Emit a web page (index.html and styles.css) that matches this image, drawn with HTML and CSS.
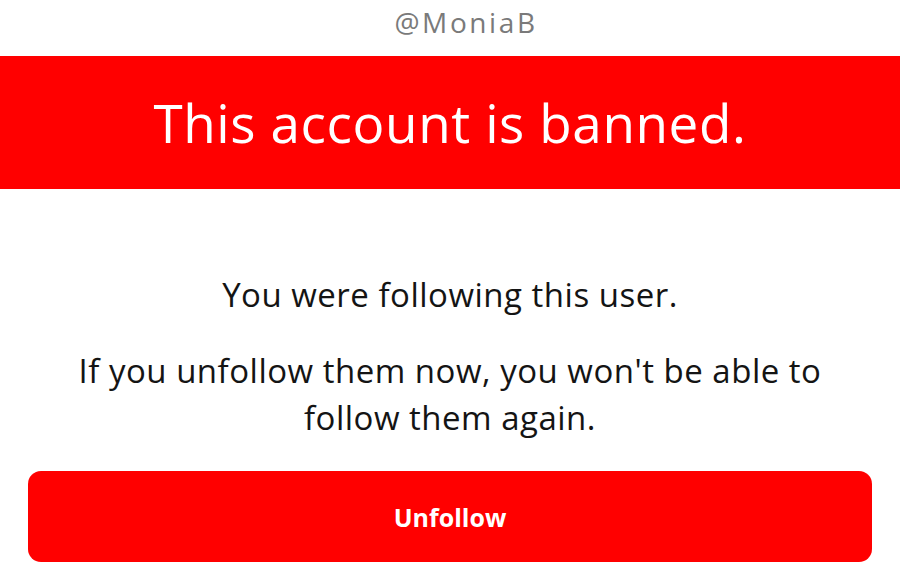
FILE: index.html
```html
<!DOCTYPE html>
<html>
<head>
<meta charset="utf-8">
<link rel="stylesheet" href="styles.css">
</head>
<body>
<div class="page">
  <div class="handle">@MoniaB</div>
  <div class="banner"><h1 class="title">This account is banned.</h1></div>
  <div class="body">
    <p class="line first">You were following this user.</p>
    <p class="line second">If you unfollow them now, you won't be able to follow them again.</p>
  </div>
  <div class="actions"><button class="btn">Unfollow</button></div>
</div>
</body>
</html>
```
FILE: styles.css
```css
html, body { margin: 0; padding: 0; background: #fff; }
body { font-family: "Open Sans", Lato, sans-serif; width: 900px; height: 580px; overflow: hidden; }
.page { display: flex; flex-direction: column; }
.handle { height: 56px; display: flex; align-items: center; justify-content: center; color: #7a7a7a; font-size: 28px; letter-spacing: 2.6px; padding: 0 0 12px 32px; box-sizing: border-box; }
.banner { background: #ff0000; height: 133px; display: flex; align-items: center; justify-content: center; }
.title { margin: 0; color: #fff; font-weight: 400; font-size: 53px; letter-spacing: 0.6px; }
.body { padding: 82px 40px 0; text-align: center; color: #141414; }
.line { margin: 0; font-size: 33px; line-height: 47px; letter-spacing: 0.5px; }
.second { margin-top: 29px; }
.actions { padding: 30px 28px 0; }
.btn { display: block; width: 100%; height: 91px; border: none; border-radius: 13px; background: #ff0000; color: #fff; font-family: inherit; font-weight: 700; font-size: 25px; }
```
